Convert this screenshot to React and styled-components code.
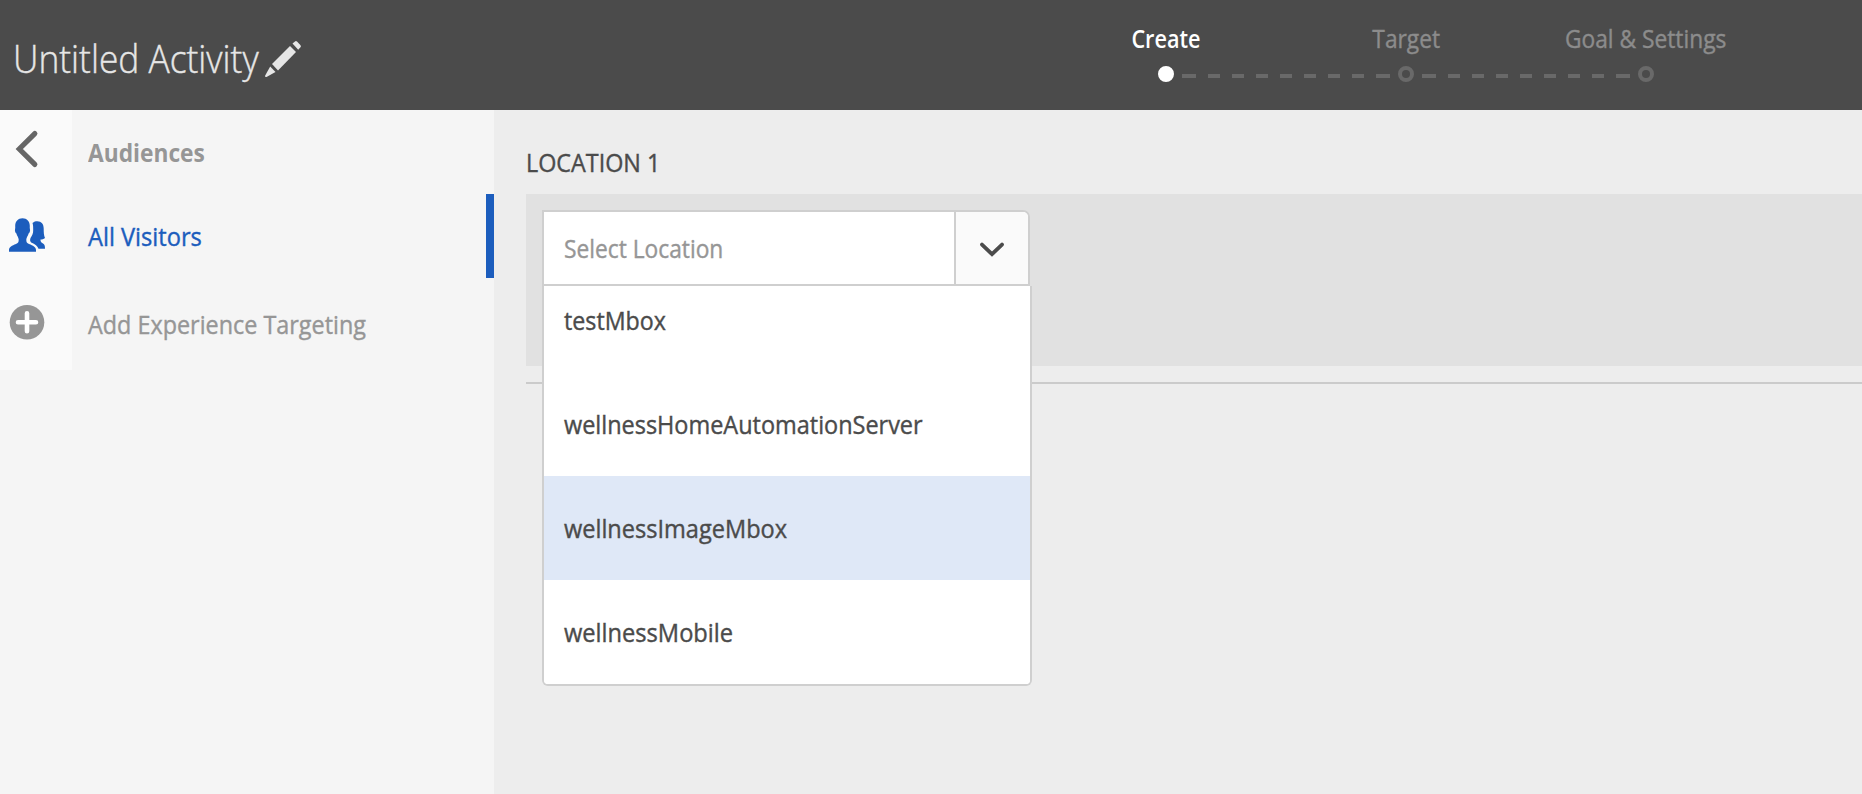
import React from "react";
import styled, { createGlobalStyle } from "styled-components";

const GlobalStyle = createGlobalStyle`
  *, *::before, *::after { box-sizing: border-box; }
  body {
    margin: 0;
    background: #ededed;
    color: #4b4b4b;
    font-family: "Open Sans", "Noto Sans", sans-serif;
    font-size: 25px;
  }
`;

const Page = styled.div`
  display: flex;
  flex-direction: column;
  height: 100vh;
  overflow: hidden;
`;

const Label = styled.span`
  display: inline-block;
  white-space: nowrap;
  line-height: 36px;
  font-weight: ${(p) => p.$weight || 400};
  -webkit-text-stroke: ${(p) => (p.$weight >= 600 ? 0 : 0.4)}px currentColor;
  transform: scaleX(${(p) => p.$fit || 1});
  transform-origin: ${(p) => p.$origin || "left"} center;
`;

const Header = styled.header`
  display: flex;
  justify-content: space-between;
  flex: 0 0 110px;
  padding-right: 96px;
  background: #4b4b4b;
`;

const Title = styled.h1`
  display: flex;
  align-items: center;
  margin: 0;
  padding: 5px 0 0 13px;
  color: #e6e6e6;
  font-size: 38px;
  font-weight: 300;
`;

const TitleText = styled.div`
  width: 252px;
`;

const PencilIcon = styled.svg`
  display: block;
  margin-top: 3px;
`;

const Steps = styled.nav`
  width: 720px;
  padding-top: 20px;
`;

const StepLabels = styled.div`
  display: grid;
  grid-template-columns: repeat(3, 240px);
  justify-items: center;
`;

const StepName = styled(Label)`
  color: ${(p) => (p.$active ? "#fff" : "#8c8c8c")};
`;

const Track = styled.div`
  display: flex;
  align-items: center;
  gap: 8px;
  padding: 10px 0 0 112px;
`;

const Dot = styled.span`
  width: 16px;
  height: 16px;
  border: 4px solid ${(p) => (p.$active ? "#fff" : "#696969")};
  border-radius: 50%;
  background: ${(p) => (p.$active ? "#fff" : "transparent")};
`;

const Connector = styled.span`
  display: flex;
  gap: 12px;
  width: 208px;
  padding-top: 4px;
`;

const Dash = styled.span`
  width: 12px;
  height: 4px;
  background: #696969;
  &:first-child, &:last-child { width: 14px; }
`;

const Body = styled.div`
  display: flex;
  flex: 1;
  min-height: 0;
`;

const Sidebar = styled.aside`
  flex: 0 0 494px;
  background: #f5f5f5;
`;

const SideRow = styled.div`
  display: flex;
  height: ${(p) => p.$height || 84}px;
  border-right: 8px solid ${(p) => (p.$active ? "#1c5dbd" : "transparent")};
  color: ${(p) => (p.$active ? "#1c5dbd" : "#969696")};
`;

const IconCell = styled.div`
  display: flex;
  flex: 0 0 72px;
  background: #fafafa;
  svg { display: block; }
`;

const SideLabel = styled.div`
  display: flex;
  align-items: center;
  padding-left: 16px;
`;

const Main = styled.main`
  flex: 1;
  padding-left: 32px;
`;

const LocationHeading = styled.h2`
  display: flex;
  align-items: center;
  height: 84px;
  margin: 0;
  padding-top: 20px;
  font-size: 25px;
  font-weight: 400;
`;

const Panel = styled.section`
  height: 172px;
  padding: 16px;
  background: #e1e1e1;
`;

const Divider = styled.hr`
  height: 2px;
  margin: 16px 0 0;
  border: 0;
  background: #cbcbcb;
`;

const Combo = styled.div`
  position: relative;
  width: 488px;
`;

const Field = styled.div`
  display: flex;
  height: 76px;
  border: 2px solid #cfcfcf;
  border-top-right-radius: 7px;
  background: #fff;
  overflow: hidden;
`;

const Placeholder = styled.div`
  display: flex;
  align-items: center;
  flex: 1;
  padding-left: 20px;
  color: #969696;
`;

const Toggle = styled.div`
  display: flex;
  align-items: center;
  justify-content: center;
  width: 74px;
  padding-top: 4px;
  border-left: 2px solid #cfcfcf;
  background: #fafafa;
`;

const Menu = styled.div`
  position: absolute;
  top: 76px;
  left: 0;
  z-index: 1;
  display: flex;
  flex-direction: column;
  justify-content: flex-end;
  width: 490px;
  height: 400px;
  border: 2px solid #cfcfcf;
  border-top: 0;
  border-radius: 0 0 6px 6px;
  background: #fff;
  overflow: hidden;
`;

const Option = styled.div`
  display: flex;
  align-items: center;
  flex: 0 0 104px;
  padding-left: 20px;
  background: ${(p) => (p.$selected ? "#dfe8f7" : "#fff")};
`;

const steps = [
  { name: "Create", fit: 0.865, weight: 600, active: true },
  { name: "Target", fit: 0.91 },
  { name: "Goal & Settings", fit: 0.91 },
];

const options = [
  { name: "testMbox", fit: 0.93 },
  { name: "wellnessHomeAutomationServer", fit: 0.938 },
  { name: "wellnessImageMbox", fit: 0.942 },
  { name: "wellnessMobile", fit: 0.946 },
];

const StepConnector = () => (
  <Connector>
    {Array.from({ length: 9 }, (_, i) => <Dash key={i} />)}
  </Connector>
);

export default function App() {
  return (
    <Page>
      <GlobalStyle />
      <Header>
        <Title>
          <TitleText><Label $weight={300} $fit={0.93}>Untitled Activity</Label></TitleText>
          <PencilIcon width="36" height="36" viewBox="0 0 36 36" fill="#e6e6e6">
            <path d="M27.5 2.5 30 .4Q31 -.3 32 .6L35.3 4Q36.4 5.2 35.5 6.2L33.2 8.8Z" />
            <path d="M25 5 31 11 13 29.5 7 23Z" />
            <path d="M5.2 25.5 10.5 31 1.5 36Q-.2 36.4 .2 34.5Z" />
          </PencilIcon>
        </Title>
        <Steps>
          <StepLabels>
            {steps.map((s) => (
              <StepName key={s.name} $active={s.active} $weight={s.weight} $fit={s.fit} $origin="center">
                {s.name}
              </StepName>
            ))}
          </StepLabels>
          <Track>
            <Dot $active />
            <StepConnector />
            <Dot />
            <StepConnector />
            <Dot />
          </Track>
        </Steps>
      </Header>
      <Body>
        <Sidebar>
          <SideRow>
            <IconCell>
              <svg width="72" height="84" fill="none" stroke="#666" strokeWidth="5.2">
                <path d="M34.8 23.6 19.3 39 34.8 54.4" strokeLinecap="round" />
              </svg>
            </IconCell>
            <SideLabel><Label $weight={700} $fit={0.91}>Audiences</Label></SideLabel>
          </SideRow>
          <SideRow $active>
            <IconCell>
              <svg width="72" height="84" fill="currentColor">
                <path d="M22.5 24.3C27 24.3 29.8 27.5 29.8 32C29.8 33 29.6 34 29.9 35C30.4 36.5 29.8 38.5 28.6 39.6C28 42 26.5 43.5 26.3 45.5C26.2 48 27 49.2 29 50C33 51.5 36 53 36 56V57.8H9V56C9 53 12 51.5 16 50C18 49.2 18.8 48 18.7 45.5C18.5 43.5 17 42 16.4 39.6C15.2 38.5 14.6 36.5 15.1 35C15.4 34 15.2 33 15.2 32C15.2 27.5 18 24.3 22.5 24.3Z" />
                <path d="M32.5 29C34 27.7 35.5 27.3 37.3 27.3C41.5 27.3 43.7 30.3 43.7 34.5C43.7 38.5 43.8 41.5 45 44C43.5 45.2 42 45.5 40.5 45.5C40.3 47.5 41.3 48.5 43 49.5C44.5 50.4 45 51.5 45 54.8H38.5C37.8 52 35 50 31.2 48.4C30 47.5 29.8 46 30.5 44C32 41.5 33.3 39.5 33.2 36C33.2 33.5 33.2 31 32.5 29Z" />
              </svg>
            </IconCell>
            <SideLabel><Label $fit={0.945}>All Visitors</Label></SideLabel>
          </SideRow>
          <SideRow $height={92}>
            <IconCell>
              <svg width="72" height="92">
                <circle cx="27" cy="44.3" r="17.3" fill="#969696" />
                <path d="M27 35.3V53.3M18 44.3H36" stroke="#fff" strokeWidth="4.6" strokeLinecap="round" />
              </svg>
            </IconCell>
            <SideLabel><Label $fit={0.935}>Add Experience Targeting</Label></SideLabel>
          </SideRow>
        </Sidebar>
        <Main>
          <LocationHeading><Label $fit={0.934}>LOCATION 1</Label></LocationHeading>
          <Panel>
            <Combo>
              <Field>
                <Placeholder><Label $fit={0.91}>Select Location</Label></Placeholder>
                <Toggle>
                  <svg width="24" height="16" viewBox="0 0 24 16" fill="none" stroke="#4b4b4b" strokeWidth="3.8">
                    <path d="M2 2.6 12 12.2 22 2.6" strokeLinecap="round" />
                  </svg>
                </Toggle>
              </Field>
              <Menu>
                {options.map((o) => (
                  <Option key={o.name} $selected={o.name === "wellnessImageMbox"}>
                    <Label $fit={o.fit}>{o.name}</Label>
                  </Option>
                ))}
              </Menu>
            </Combo>
          </Panel>
          <Divider />
        </Main>
      </Body>
    </Page>
  );
}
